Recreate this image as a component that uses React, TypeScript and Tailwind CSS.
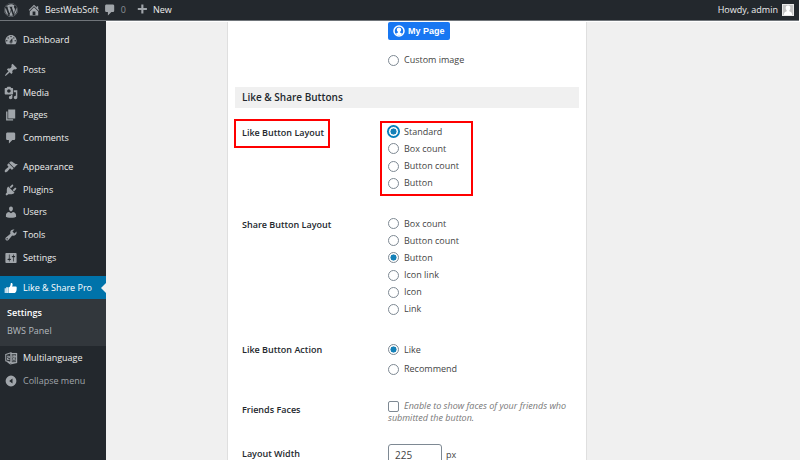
import { useId, type ReactNode } from "react";
import { FaWordpress } from "react-icons/fa";

const paths = {
  home: "M16 8.5l1.53 1.53-1.06 1.06L10 4.6l-6.47 6.49-1.06-1.06L10 2.5l4 4v-2h2v4zm-6-2.46l6 5.99V18H4v-5.97zM12 17v-5H8v5h4z",
  plus: "M17 7v3h-5v5H9v-5H4V7h5V2h3v5h5z",
  dashboard:
    "M3.76 16h12.48c1.1-1.37 1.76-3.11 1.76-5 0-4.42-3.58-8-8-8s-8 3.58-8 8c0 1.89.66 3.63 1.76 5zM10 4c.55 0 1 .45 1 1s-.45 1-1 1-1-.45-1-1 .45-1 1-1zM6 6c.55 0 1 .45 1 1s-.45 1-1 1-1-.45-1-1 .45-1 1-1zm8 0c.55 0 1 .45 1 1s-.45 1-1 1-1-.45-1-1 .45-1 1-1zm-5.37 5.55L12 7v6c0 1.1-.9 2-2 2s-2-.9-2-2c0-.57.24-1.08.63-1.45zM4 10c.55 0 1 .45 1 1s-.45 1-1 1-1-.45-1-1 .45-1 1-1zm12 0c.55 0 1 .45 1 1s-.45 1-1 1-1-.45-1-1 .45-1 1-1zm-5 3c0-.55-.45-1-1-1s-1 .45-1 1 .45 1 1 1 1-.45 1-1z",
  pin: "M10.44 3.02l1.82-1.82 6.36 6.35-1.83 1.82c-1.05-.68-2.48-.57-3.41.36l-.75.75c-.92.93-1.04 2.35-.35 3.41l-1.83 1.82-2.41-2.41-2.8 2.79c-.42.42-3.38 2.71-3.8 2.29s1.86-3.39 2.28-3.81l2.79-2.79L4.1 9.36l1.83-1.82c1.05.69 2.48.57 3.4-.36l.75-.75c.93-.92 1.05-2.35.36-3.41z",
  media:
    "M13 11V4c0-.55-.45-1-1-1h-1.67L9 1H5L3.67 3H2c-.55 0-1 .45-1 1v7c0 .55.45 1 1 1h10c.55 0 1-.45 1-1zM7 4.5c1.38 0 2.5 1.12 2.5 2.5S8.38 9.5 7 9.5 4.5 8.38 4.5 7 5.62 4.5 7 4.5zM14 6h5v10.5c0 1.38-1.12 2.5-2.5 2.5S14 17.88 14 16.5s1.12-2.5 2.5-2.5c.17 0 .34.02.5.05V9h-3V6zm-4 8.05V13h2v3.5c0 1.38-1.12 2.5-2.5 2.5S7 17.88 7 16.5 8.12 14 9.5 14c.17 0 .34.02.5.05z",
  page: "M6 15V2h10v13H6zm-1 1h8v2H3V5h2v11z",
  comment:
    "M5 2h9c1.1 0 2 .9 2 2v7c0 1.1-.9 2-2 2h-2l-5 5v-5H5c-1.1 0-2-.9-2-2V4c0-1.1.9-2 2-2z",
  brush:
    "M14.48 11.06L7.41 3.99l1.5-1.5c.5-.56 2.3-.47 3.51.32 1.21.8 1.43 1.28 2.91 2.1 1.18.64 2.45 1.26 4.45.85zm-.71.71L6.7 4.7 4.93 6.47c-.39.39-.39 1.02 0 1.41l1.06 1.06c.39.39.39 1.03 0 1.42-.6.6-1.43 1.11-2.21 1.69-.35.26-.7.53-1.01.84C1.43 14.23.4 16.08 1.4 17.07c.99 1 2.84-.03 4.18-1.36.31-.31.58-.66.85-1.02.57-.78 1.08-1.61 1.69-2.21.39-.39 1.02-.39 1.41 0l1.06 1.06c.39.39 1.02.39 1.41 0z",
  plug: "M13.11 4.36L9.87 7.6 8 5.73l3.24-3.24c.35-.34 1.05-.2 1.56.32.52.51.66 1.21.31 1.55zm-8 1.77l.91-1.12 9.01 9.01-1.19.84c-.71.71-2.63 1.16-3.82 1.16H6.14L4.9 17.26c-.59.59-1.54.59-2.12 0-.59-.58-.59-1.53 0-2.12l1.24-1.24v-3.88c0-1.13.4-3.19 1.09-3.89zm7.26 3.97l3.24-3.24c.34-.35 1.04-.21 1.55.31.52.51.66 1.21.31 1.55l-3.24 3.25z",
  user: "M10 9.25c-2.27 0-2.73-3.44-2.73-3.44C7 4.02 7.82 2 9.97 2c2.16 0 2.98 2.02 2.71 3.81 0 0-.41 3.44-2.68 3.44zm0 2.57L12.72 10c2.39 0 4.52 2.33 4.52 4.53v2.49s-3.65 1.13-7.24 1.13c-3.65 0-7.24-1.13-7.24-1.13v-2.49c0-2.25 1.94-4.48 4.47-4.48z",
  wrench:
    "M16.68 9.77c-1.34 1.34-3.3 1.67-4.95.99l-5.41 6.52c-.99.99-2.59.99-3.58 0s-.99-2.59 0-3.57l6.52-5.42c-.68-1.65-.35-3.61.99-4.95 1.28-1.28 3.12-1.62 4.72-1.06l-2.89 2.89 2.82 2.82 2.86-2.87c.53 1.58.18 3.39-1.08 4.65zM3.81 16.21c.4.39 1.04.39 1.43 0 .4-.4.4-1.04 0-1.43-.39-.4-1.03-.4-1.43 0-.39.39-.39 1.03 0 1.43z",
  sliders:
    "M18 16V4c0-.55-.45-1-1-1H3c-.55 0-1 .45-1 1v12c0 .55.45 1 1 1h14c.55 0 1-.45 1-1zM8 11h1c.55 0 1 .45 1 1s-.45 1-1 1H8v1.5c0 .28-.22.5-.5.5s-.5-.22-.5-.5V13H6c-.55 0-1-.45-1-1s.45-1 1-1h1V5.5c0-.28.22-.5.5-.5s.5.22.5.5V11zm5-2h-1c-.55 0-1-.45-1-1s.45-1 1-1h1V5.5c0-.28.22-.5.5-.5s.5.22.5.5V7h1c.55 0 1 .45 1 1s-.45 1-1 1h-1v5.5c0 .28-.22.5-.5.5s-.5-.22-.5-.5V9z",
  thumb:
    "M1 10.500h1.500V17H1zM3.200 9h2.300v8H3.200zM6.300 9h1C8.800 8 9.500 6 9.700 3.200c.1-.9 2.600-.6 2.600 1.700 0 1.200-.4 2.300-.8 3.100h5c1 0 1.700.8 1.700 1.700 0 4.800-1.200 7.300-3 7.300H6.300z",
  collapse:
    "M10 1a9 9 0 1 0 0 18 9 9 0 0 0 0-18zm2.500 4.800v8.400L7 10z",
};

type IconName = keyof typeof paths;

function Icon({ name, className }: { name: IconName; className: string }) {
  return (
    <svg viewBox="0 0 20 20" aria-hidden="true" className={className}>
      <path fill="currentColor" fillRule="evenodd" d={paths[name]} />
    </svg>
  );
}

function LanguageIcon() {
  return (
    <svg viewBox="0 0 20 20" aria-hidden="true" className="size-[14px] shrink-0" fill="none" stroke="currentColor">
      <path fill="currentColor" fillOpacity="0.35" strokeWidth="1.200" d="M10 3.500h8v13h-8z" />
      <path strokeWidth="1.500" d="M2.500 5 10 2.500v14L2.500 14zM10 3.500h8v13l-9 2-4-3" />
      <path strokeWidth="1.400" d="M4.300 7.500h3.400v2.300H5v2.500h3M12 7.500h5M14.500 6v1.500m1.500 0c-.5 3-2 4.500-4 5.500m.5-4c1 2 2 3.500 4 4" />
    </svg>
  );
}

function MenuLink({ name, children }: { name: IconName; children: ReactNode }) {
  return (
    <li className="flex">
      <a href="#" className="flex flex-1 items-center gap-[5px] pl-[4px] text-[#eee]">
        <Icon name={name} className="size-[14px] shrink-0 text-[#a0a5aa]" />
        {children}
      </a>
    </li>
  );
}

const radioClass =
  "size-[11px] shrink-0 appearance-none rounded-full border bg-white checked:bg-[radial-gradient(circle,#1581b8_0_2.800px,#fff_3.300px)]";

function Radio({ name, label, checked, focused }: { name: string; label: string; checked?: boolean; focused?: boolean }) {
  return (
    <label className="flex items-center gap-[5px]">
      <input
        type="radio"
        name={name}
        defaultChecked={checked}
        className={focused ? `${radioClass} border-[#007cba] ring-1 ring-[#007cba]` : `${radioClass} border-[#7e8993]`}
      />
      {label}
    </label>
  );
}

function Field({ title, children }: { title: string; children: ReactNode }) {
  const id = useId();
  return (
    <div role="group" aria-labelledby={id} className="grid grid-cols-[146px_1fr]">
      <div id={id} className="h-[19px] font-semibold leading-[19px] text-[#23282d]">
        {title}
      </div>
      <div>{children}</div>
    </div>
  );
}

export default function App() {
  return (
    <div className="flex h-screen flex-col overflow-hidden bg-white font-['Open_Sans','Noto_Sans',sans-serif] text-[9px] leading-[14px] text-[#444]">
      <header className="mr-px flex h-[21px] shrink-0 items-center border-b border-[#70757a] bg-[#23282d] pl-[4px] pr-[5px] text-[#eee]">
        <a href="#" aria-label="About WordPress" className="text-[#a0a5aa]">
          <FaWordpress className="size-[14px]" />
        </a>
        <a href="#" className="ml-[9px] flex items-center gap-[4px]">
          <Icon name="home" className="size-[14px] text-[#a0a5aa]" />
          BestWebSoft
        </a>
        <a href="#" className="ml-[4px] flex items-center gap-[4px] text-[#8b9095]">
          <Icon name="comment" className="size-[14px] text-[#a0a5aa]" />
          0
        </a>
        <a href="#" className="ml-[9px] flex items-center gap-[4px]">
          <Icon name="plus" className="size-[14px] text-[#a0a5aa]" />
          New
        </a>
        <a href="#" className="ml-auto flex items-center gap-[4px]">
          Howdy, admin
          <svg viewBox="0 0 12 12" aria-hidden="true" className="size-[12px]">
            <rect width="12" height="12" fill="#e8e8e8" />
            <rect x="1" y="1" width="10" height="10" fill="#c4c4c4" />
            <path fill="#fff" d="M6 1.500c1.700 0 2.500 1.200 2.300 2.700-.1 1-.5 1.700-1 2.200v.8c1.600.4 2.700 1.200 2.900 3.800H1.800c.2-2.600 1.300-3.400 2.900-3.800v-.8c-.5-.5-.9-1.200-1-2.200C3.500 2.700 4.300 1.500 6 1.500z" />
          </svg>
        </a>
      </header>

      <div className="flex min-h-0 flex-1">
        <nav className="w-[106px] shrink-0 bg-[#23282d] pt-[7px]">
          <ul className="grid h-[23px]">
            <MenuLink name="dashboard">Dashboard</MenuLink>
          </ul>
          <ul className="mt-[8px] grid h-[90px] auto-rows-fr">
            <MenuLink name="pin">Posts</MenuLink>
            <MenuLink name="media">Media</MenuLink>
            <MenuLink name="page">Pages</MenuLink>
            <MenuLink name="comment">Comments</MenuLink>
          </ul>
          <ul className="mt-[7px] grid h-[113px] auto-rows-fr">
            <MenuLink name="brush">Appearance</MenuLink>
            <MenuLink name="plug">Plugins</MenuLink>
            <MenuLink name="user">Users</MenuLink>
            <MenuLink name="wrench">Tools</MenuLink>
            <MenuLink name="sliders">Settings</MenuLink>
          </ul>
          <a href="#" className="mt-[7px] flex h-[23px] items-center gap-[5px] bg-[#0073aa] pl-[4px] text-white">
            <Icon name="thumb" className="size-[14px] shrink-0" />
            Like &amp; Share Pro
            <svg viewBox="0 0 5 10" aria-hidden="true" className="ml-auto h-[10px] w-[5px]">
              <path fill="#f1f1f1" d="M5 0v10L0 5z" />
            </svg>
          </a>
          <ul className="bg-[#32373c] pb-[6px] pl-[7px] pt-[5px] leading-[18px]">
            <li className="h-[18px]">
              <a href="#" className="font-semibold text-white">Settings</a>
            </li>
            <li className="h-[18px]">
              <a href="#" className="text-[#b4b9be]">BWS Panel</a>
            </li>
          </ul>
          <a href="#" className="flex h-[23px] items-center gap-[5px] pl-[4px] text-[#eee]">
            <span className="text-[#a0a5aa]">
              <LanguageIcon />
            </span>
            Multilanguage
          </a>
          <button type="button" className="flex h-[23px] items-center gap-[6px] pl-[5px] text-[#a0a5aa]">
            <Icon name="collapse" className="size-[12px] shrink-0" />
            Collapse menu
          </button>
        </nav>

        <main className="min-w-0 flex-1 overflow-hidden border-t border-white bg-[#f0f0f0] pl-[121px]">
          <form className="w-[360px] border-x border-[#dfdfdf] bg-white px-[7px] pb-10">
            <div className="pl-[153px]">
              <button type="button" className="flex h-[18px] w-[62px] items-center gap-[3px] rounded-[2px] bg-[#1877f2] pl-[5px] font-['Liberation_Sans',Arial,sans-serif] font-bold text-white">
                <svg viewBox="0 0 12 12" aria-hidden="true" className="size-[12px] shrink-0">
                  <circle cx="6" cy="6" r="5" fill="none" stroke="#fff" strokeWidth="1.500" />
                  <path fill="#fff" d="M6 2.500c1.300 0 2.200.9 2.200 2.200 0 .9-.4 1.500-1 1.900v1.100l1.800.8-1 1.500H4l-1-1.500 1.800-.8V6.600c-.6-.4-1-1-1-1.900C3.800 3.400 4.700 2.500 6 2.500z" />
                </svg>
                My Page
              </button>
              <div className="mt-[13px]">
                <Radio name="image" label="Custom image" />
              </div>
            </div>

            <h2 className="mt-[20px] h-[21px] bg-[#f0f0f0] pl-[7px] text-[10px] font-semibold leading-[21px] text-[#23282d]">
              Like &amp; Share Buttons
            </h2>

            <div className="pl-[7px]">
              <div className="relative mt-[15px]">
                <Field title="Like Button Layout">
                  <div className="grid h-[69px] auto-rows-fr">
                    <Radio name="like-layout" label="Standard" checked focused />
                    <Radio name="like-layout" label="Box count" />
                    <Radio name="like-layout" label="Button count" />
                    <Radio name="like-layout" label="Button" />
                  </div>
                </Field>
                <div className="pointer-events-none absolute -left-[8px] -top-[4px] h-[29px] w-[96px] border-2 border-[#f00]" />
                <div className="pointer-events-none absolute -top-[2px] left-[138px] h-[75px] w-[93px] border-2 border-[#f00]" />
              </div>

              <div className="mt-[23px]">
                <Field title="Share Button Layout">
                  <div className="grid h-[103px] auto-rows-fr">
                    <Radio name="share-layout" label="Box count" />
                    <Radio name="share-layout" label="Button count" />
                    <Radio name="share-layout" label="Button" checked />
                    <Radio name="share-layout" label="Icon link" />
                    <Radio name="share-layout" label="Icon" />
                    <Radio name="share-layout" label="Link" />
                  </div>
                </Field>
              </div>

              <div className="mt-[22px]">
                <Field title="Like Button Action">
                  <div className="grid h-[39px] auto-rows-fr">
                    <Radio name="action" label="Like" checked />
                    <Radio name="action" label="Recommend" />
                  </div>
                </Field>
              </div>

              <div className="mt-[21px]">
                <Field title="Friends Faces">
                  <label className="block italic leading-[12px] text-[#777]">
                    <input
                      type="checkbox"
                      className="mr-[5px] size-[11px] appearance-none rounded-[2px] border border-[#7e8993] bg-white align-middle"
                    />
                    Enable to show faces of your friends who submitted the button.
                  </label>
                </Field>
              </div>

              <div className="mt-[20px] grid grid-cols-[146px_1fr]">
                <label htmlFor="layout-width" className="font-semibold leading-[19px] text-[#23282d]">
                  Layout Width
                </label>
                <div className="flex items-center gap-[4px]">
                  <input
                    id="layout-width"
                    type="text"
                    defaultValue="225"
                    className="h-[21px] w-[54px] rounded-[3px] border border-[#7e8993] bg-white px-[6px] text-[10px] text-[#444]"
                  />
                  px
                </div>
              </div>
            </div>
          </form>
        </main>
      </div>
    </div>
  );
}
